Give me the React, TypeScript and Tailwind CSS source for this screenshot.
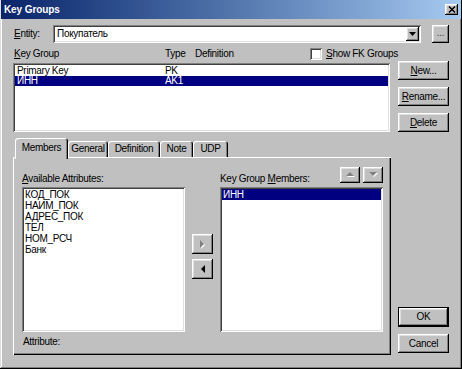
import React from 'react';

const RAISED = 'shadow-[inset_-1px_-1px_#000000,inset_1px_1px_#ffffff,inset_-2px_-2px_#808080,inset_2px_2px_#dfdfdf]';
const SUNKEN = 'shadow-[inset_1px_1px_#808080,inset_-1px_-1px_#ffffff,inset_2px_2px_#404040,inset_-2px_-2px_#dfdfdf]';
const DEFAULT_BTN = 'shadow-[inset_0_0_0_1px_#000000,inset_-2px_-2px_#000000,inset_2px_2px_#ffffff,inset_-3px_-3px_#808080,inset_3px_3px_#dfdfdf]';
const TAB = 'shadow-[inset_1px_1px_#ffffff,inset_-1px_0_#000000,inset_-2px_0_#808080]';

const U = ({ c }: { c: string }) => <span className="underline underline-offset-[1px]">{c}</span>;

function Btn({ children, className = '' }: { children: React.ReactNode; className?: string }) {
  return (
    <div className={`flex items-center justify-center bg-[#c0c0c0] ${RAISED} ${className}`}>{children}</div>
  );
}

function Tab({ label, className }: { label: string; className: string }) {
  return <div className={`flex items-center justify-center rounded-t-[3px] bg-[#c0c0c0] ${TAB} ${className}`}>{label}</div>;
}

// disabled arrow: grey triangle with white emboss
function DimArrow({ dir }: { dir: 'up' | 'down' | 'right' }) {
  const pts =
    dir === 'up' ? '1,6 5,2 9,6' : dir === 'down' ? '1,2 5,6 9,2' : '2,1 6,5 2,9';
  return (
    <svg width="10" height="10" viewBox="0 0 10 10">
      <polygon points={pts} fill="#ffffff" transform="translate(1,1)" />
      <polygon points={pts} fill="#808080" />
    </svg>
  );
}

export default function App() {
  return (
    <div className="w-[462px] h-[369px] overflow-hidden bg-[#c0c0c0] font-['Liberation_Sans',Arial,sans-serif] text-[10px] leading-[10px] tracking-[-0.3px] text-black shadow-[inset_-1px_-1px_#000000,inset_1px_1px_#dfdfdf,inset_-2px_-2px_#808080,inset_2px_2px_#ffffff]">
      {/* title bar */}
      <div className="h-[19px] mx-[1px] flex items-center justify-between pl-[3px] pr-[3px] bg-linear-to-r from-[#0a246a] to-[#a6caf0]">
        <span className="font-bold text-white tracking-[-0.1px]">Key Groups</span>
        <Btn className="w-[13px] h-[11px]">
          <svg width="8" height="7" viewBox="0 0 8 7">
            <path d="M1 0.5l6 6M7 0.5l-6 6" stroke="#000" strokeWidth="1.5" />
          </svg>
        </Btn>
      </div>

      <div className="px-[13px]">
        {/* entity row */}
        <div className="mt-[6px] h-[18px] flex items-center">
          <div className="w-[40px] pl-[1px]">
            <U c="E" />ntity:
          </div>
          <div className={`w-[368px] h-[18px] bg-white flex items-center justify-between pl-[4px] pr-[2px] ${SUNKEN}`}>
            <span>Покупатель</span>
            <Btn className="w-[13px] h-[14px]">
              <svg width="7" height="4" viewBox="0 0 7 4">
                <path d="M0 0h7L3.5 4z" fill="#000" />
              </svg>
            </Btn>
          </div>
          <Btn className="ml-[11px] w-[17px] h-[18px] text-[#404040] pb-[2px]">...</Btn>
        </div>

        {/* list header */}
        <div className="mt-[4px] h-[13px] flex items-center">
          <div className="w-[152px] pl-[1px]">
            <U c="K" />ey Group
          </div>
          <div className="w-[30px]">Type</div>
          <div className="w-[115px]">Definition</div>
          <div className={`w-[12px] h-[12px] bg-white ${SUNKEN}`} />
          <div className="ml-[4px]">
            <U c="S" />how FK Groups
          </div>
        </div>

        <div className="mt-[1px] flex">
          {/* left column */}
          <div className="w-[378px] flex flex-col">
            <div className={`mt-[2px] h-[69px] w-[377px] bg-white pt-[3px] px-[2px] ${SUNKEN}`}>
              <div className="h-[10px] flex">
                <div className="w-[150px] pl-[2px]">Primary Key</div>
                <div>PK</div>
              </div>
              <div className="h-[10px] flex bg-[#000080] text-white">
                <div className="w-[150px] pl-[2px]">ИНН</div>
                <div>AK1</div>
              </div>
            </div>

            {/* tab control */}
            <div className="mt-[6px] h-[19px] flex items-end pl-[2px]">
              <Tab label="Members" className="relative z-10 w-[53px] h-[21px] -mb-[2px] pb-[2px]" />
              <Tab label="General" className="w-[40px] h-[16px]" />
              <Tab label="Definition" className="w-[52px] h-[16px]" />
              <Tab label="Note" className="w-[33px] h-[16px]" />
              <Tab label="UDP" className="w-[35px] h-[16px]" />
            </div>
            <div className="h-[198px] flex flex-col pt-[10px] pl-[9px] pr-[8px] bg-[#c0c0c0] shadow-[inset_1px_1px_#ffffff,inset_-1px_-1px_#000000,inset_-2px_-2px_#808080]">
              <div className="flex">
                <div className="w-[163px] flex flex-col">
                  <div className="h-[20px] flex items-end pb-[3px]">
                    <span>
                      <U c="A" />vailable Attributes:
                    </span>
                  </div>
                  <div className={`h-[145px] bg-white pt-[2px] pl-[3px] leading-[11px] ${SUNKEN}`}>
                    <div className="h-[11px]">КОД_ПОК</div>
                    <div className="h-[11px]">НАИМ_ПОК</div>
                    <div className="h-[11px]">АДРЕС_ПОК</div>
                    <div className="h-[11px]">ТЕЛ</div>
                    <div className="h-[11px]">НОМ_РСЧ</div>
                    <div className="h-[11px]">Банк</div>
                  </div>
                </div>

                <div className="mx-[7px] w-[21px] flex flex-col">
                  <Btn className="mt-[67px] h-[20px]">
                    <DimArrow dir="right" />
                  </Btn>
                  <Btn className="mt-[5px] h-[20px]">
                    <svg width="10" height="10" viewBox="0 0 10 10">
                      <polygon points="7,1 3,5 7,9" fill="#000" />
                    </svg>
                  </Btn>
                </div>

                <div className="w-[163px] flex flex-col">
                  <div className="h-[20px] flex justify-between">
                    <span className="self-end pb-[3px]">
                      Key Group <U c="M" />embers:
                    </span>
                    <div className="flex gap-[3px] h-[16px]">
                      <Btn className="w-[20px] h-[16px]">
                        <DimArrow dir="up" />
                      </Btn>
                      <Btn className="w-[20px] h-[16px]">
                        <DimArrow dir="down" />
                      </Btn>
                    </div>
                  </div>
                  <div className={`h-[145px] bg-white pt-[2px] px-[2px] leading-[11px] ${SUNKEN}`}>
                    <div className="h-[11px] pl-[1px] bg-[#000080] text-white">ИНН</div>
                  </div>
                </div>
              </div>
              <div className="mt-[5px] pl-[1px]">Attribute:</div>
            </div>
          </div>

          {/* right buttons */}
          <div className="ml-[7px] w-[51px] h-[294px] flex flex-col">
            <Btn className="h-[19px]">
              <span>
                <U c="N" />ew...
              </span>
            </Btn>
            <Btn className="mt-[7px] h-[19px]">
              <span>
                <U c="R" />ename...
              </span>
            </Btn>
            <Btn className="mt-[7px] h-[19px]">
              <span>
                <U c="D" />elete
              </span>
            </Btn>
            <div className={`mt-auto h-[20px] flex items-center justify-center bg-[#c0c0c0] ${DEFAULT_BTN}`}>OK</div>
            <Btn className="mt-[7px] mb-[2px] h-[19px]">Cancel</Btn>
          </div>
        </div>
      </div>
    </div>
  );
}
